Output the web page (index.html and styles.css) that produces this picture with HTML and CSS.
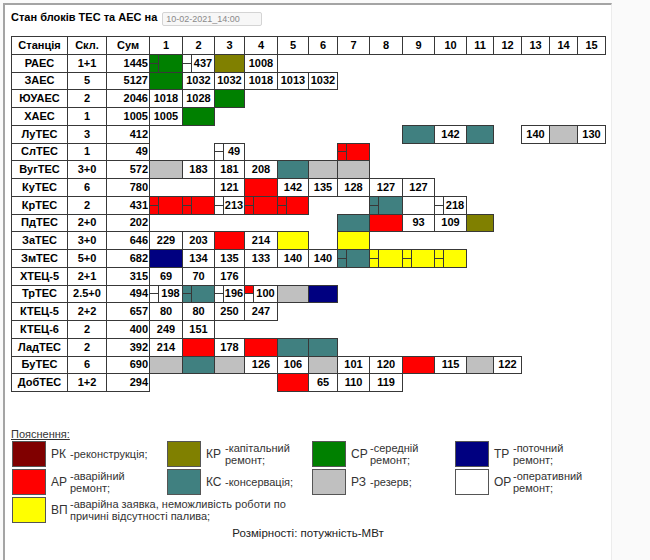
FILE: index.html
```html
<!DOCTYPE html>
<html lang="uk">
<head>
<meta charset="utf-8">
<title>Стан блоків ТЕС та АЕС</title>
<link rel="stylesheet" href="styles.css">
</head>
<body>
<div class="frame">
  <div class="head">
    <span class="title">Стан блоків ТЕС та АЕС на</span>
    <input class="date" type="text" value="10-02-2021_14:00" disabled>
  </div>

  <div class="tbl">
    <div class="c st">Станція</div><div class="c">Скл.</div><div class="c">Сум</div>
    <div class="c">1</div><div class="c">2</div><div class="c">3</div><div class="c">4</div><div class="c">5</div>
    <div class="c">6</div><div class="c">7</div><div class="c">8</div><div class="c">9</div><div class="c">10</div>
    <div class="c">11</div><div class="c">12</div><div class="c">13</div><div class="c">14</div><div class="c">15</div>

    <div class="c st">РАЕС</div><div class="c">1+1</div><div class="c sm">1445</div>
    <div class="c sp g"><span class="l"><i></i><i></i></span><span class="v"></span></div>
    <div class="c sp"><span class="l"><i></i><i></i></span><span class="v">437</span></div>
    <div class="c o"></div><div class="c">1008</div>

    <div class="c st">ЗАЕС</div><div class="c">5</div><div class="c sm">5127</div>
    <div class="c g"></div><div class="c">1032</div><div class="c">1032</div><div class="c">1018</div><div class="c">1013</div><div class="c">1032</div>

    <div class="c st">ЮУАЕС</div><div class="c">2</div><div class="c sm">2046</div>
    <div class="c">1018</div><div class="c">1028</div><div class="c g"></div>

    <div class="c st">ХАЕС</div><div class="c">1</div><div class="c sm">1005</div>
    <div class="c">1005</div><div class="c g"></div>

    <div class="c st">ЛуТЕС</div><div class="c">3</div><div class="c sm">412</div>
    <div></div><div></div><div></div><div></div><div></div><div></div><div></div><div></div>
    <div class="c t"></div><div class="c">142</div><div class="c t"></div><div></div><div class="c">140</div><div class="c s"></div><div class="c">130</div>

    <div class="c st">СлТЕС</div><div class="c">1</div><div class="c sm">49</div>
    <div></div><div></div>
    <div class="c sp"><span class="l"><i></i><i></i></span><span class="v">49</span></div>
    <div></div><div></div><div></div>
    <div class="c sp r"><span class="l"><i></i><i></i></span><span class="v"></span></div>

    <div class="c st">ВугТЕС</div><div class="c">3+0</div><div class="c sm">572</div>
    <div class="c s"></div><div class="c">183</div><div class="c">181</div><div class="c">208</div><div class="c t"></div><div class="c s"></div><div class="c s"></div>

    <div class="c st">КуТЕС</div><div class="c">6</div><div class="c sm">780</div>
    <div></div><div></div><div class="c">121</div><div class="c r"></div><div class="c">142</div><div class="c">135</div><div class="c">128</div><div class="c">127</div><div class="c">127</div>

    <div class="c st">КрТЕС</div><div class="c">2</div><div class="c sm">431</div>
    <div class="c sp r"><span class="l"><i></i><i></i></span><span class="v"></span></div>
    <div class="c sp r"><span class="l"><i></i><i></i></span><span class="v"></span></div>
    <div class="c sp"><span class="l"><i></i><i></i></span><span class="v">213</span></div>
    <div class="c sp r"><span class="l"><i></i><i></i></span><span class="v"></span></div>
    <div class="c sp r"><span class="l"><i></i><i></i></span><span class="v"></span></div>
    <div></div><div></div>
    <div class="c sp t"><span class="l"><i></i><i></i></span><span class="v"></span></div>
    <div></div>
    <div class="c sp"><span class="l"><i></i><i></i></span><span class="v">218</span></div>

    <div class="c st">ПдТЕС</div><div class="c">2+0</div><div class="c sm">202</div>
    <div></div><div></div><div></div><div></div><div></div><div></div>
    <div class="c t"></div><div class="c r"></div><div class="c">93</div><div class="c">109</div><div class="c o"></div>

    <div class="c st">ЗаТЕС</div><div class="c">3+0</div><div class="c sm">646</div>
    <div class="c">229</div><div class="c">203</div><div class="c r"></div><div class="c">214</div><div class="c y"></div><div></div><div class="c y"></div>

    <div class="c st">ЗмТЕС</div><div class="c">5+0</div><div class="c sm">682</div>
    <div class="c n"></div><div class="c">134</div><div class="c">135</div><div class="c">133</div><div class="c">140</div><div class="c">140</div>
    <div class="c sp t"><span class="l"><i></i><i></i></span><span class="v"></span></div>
    <div class="c sp y"><span class="l"><i></i><i></i></span><span class="v"></span></div>
    <div class="c sp y"><span class="l"><i></i><i></i></span><span class="v"></span></div>
    <div class="c sp y"><span class="l"><i></i><i></i></span><span class="v"></span></div>

    <div class="c st">ХТЕЦ-5</div><div class="c">2+1</div><div class="c sm">315</div>
    <div class="c">69</div><div class="c">70</div><div class="c">176</div>

    <div class="c st">ТрТЕС</div><div class="c">2.5+0</div><div class="c sm">494</div>
    <div class="c sp"><span class="l"><i></i><i></i></span><span class="v">198</span></div>
    <div class="c sp t"><span class="l"><i></i><i></i></span><span class="v"></span></div>
    <div class="c sp"><span class="l"><i></i><i></i></span><span class="v">196</span></div>
    <div class="c sp"><span class="l"><i class="r"></i><i></i></span><span class="v">100</span></div>
    <div class="c s"></div><div class="c n"></div>

    <div class="c st">КТЕЦ-5</div><div class="c">2+2</div><div class="c sm">657</div>
    <div class="c">80</div><div class="c">80</div><div class="c">250</div><div class="c">247</div>

    <div class="c st">КТЕЦ-6</div><div class="c">2</div><div class="c sm">400</div>
    <div class="c">249</div><div class="c">151</div>

    <div class="c st">ЛадТЕС</div><div class="c">2</div><div class="c sm">392</div>
    <div class="c">214</div><div class="c r"></div><div class="c">178</div><div class="c r"></div><div class="c t"></div><div class="c t"></div>

    <div class="c st">БуТЕС</div><div class="c">6</div><div class="c sm">690</div>
    <div class="c s"></div><div class="c t"></div><div class="c s"></div><div class="c">126</div><div class="c">106</div><div class="c s"></div>
    <div class="c">101</div><div class="c">120</div><div class="c r"></div><div class="c">115</div><div class="c s"></div><div class="c">122</div>

    <div class="c st">ДобТЕС</div><div class="c">1+2</div><div class="c sm">294</div>
    <div></div><div></div><div></div><div></div>
    <div class="c r"></div><div class="c">65</div><div class="c">110</div><div class="c">119</div>
  </div>

  <div class="note">Пояснення:</div>
  <div class="legend">
    <div class="it"><span class="sw m"></span><span class="ab">РК</span><span class="ds">-реконструкція;</span></div>
    <div class="it"><span class="sw o"></span><span class="ab">КР</span><span class="ds">-капітальний<br>ремонт;</span></div>
    <div class="it"><span class="sw g"></span><span class="ab">СР</span><span class="ds">-середній<br>ремонт;</span></div>
    <div class="it"><span class="sw n"></span><span class="ab">ТР</span><span class="ds">-поточний<br>ремонт;</span></div>

    <div class="it"><span class="sw r"></span><span class="ab">АР</span><span class="ds">-аварійний<br>ремонт;</span></div>
    <div class="it"><span class="sw t"></span><span class="ab">КС</span><span class="ds">-консервація;</span></div>
    <div class="it"><span class="sw s"></span><span class="ab">РЗ</span><span class="ds">-резерв;</span></div>
    <div class="it"><span class="sw w"></span><span class="ab">ОР</span><span class="ds">-оперативний<br>ремонт;</span></div>

    <div class="it wide"><span class="sw y"></span><span class="ab">ВП</span><span class="ds">-аварійна заявка, неможливість роботи по<br>причині відсутності палива;</span></div>
  </div>
  <div class="dims">Розмірності: потужність-МВт</div>
</div>
</body>
</html>
```

FILE: styles.css
```css
html {
  background: #fafafa;
}

body {
  margin: 0;
  font-family: "Liberation Sans", Arial, sans-serif;
  color: #000;
}

.frame {
  box-sizing: border-box;
  margin: 3px 0 0 3px;
  width: 609px;
  height: 557px;
  padding: 0 0 0 6px;
  background: #fff;
  border-top: 2px solid #a4a4a4;
  border-left: 2px solid #a4a4a4;
  border-right: 1px solid #ececec;
  overflow: hidden;
}

/* title row */
.head {
  box-sizing: border-box;
  height: 31px;
  padding-top: 7px;
  display: flex;
  align-items: flex-start;
  gap: 5px;
}

.title {
  font-size: 11px;
  font-weight: bold;
  line-height: 14px;
  margin-top: -2px;
}

.date {
  box-sizing: border-box;
  width: 100px;
  height: 14px;
  margin: 0;
  padding: 0 0 0 3px;
  border: 1px solid #d4d4d4;
  border-radius: 2px;
  background: #f7f7f7;
  color: #8a8a8a;
  font-family: "Liberation Sans", Arial, sans-serif;
  font-size: 9px;
  line-height: 12px;
  -webkit-appearance: none;
  appearance: none;
}

/* main table */
.tbl {
  display: grid;
  grid-template-columns: 56px 39px 43px 33px 32px 30px 33px 31px 29px 32px 33px 32px 32px 27px 28px 28px 28px 28px;
  grid-auto-rows: 17.75px;
  width: 594px;
  font-size: 11px;
  font-weight: bold;
  line-height: 1;
}

.c {
  border: 1px solid #383838;
  margin: 0 -1px -1px 0;
  display: flex;
  align-items: center;
  justify-content: center;
  background: #fff;
  white-space: nowrap;
  overflow: hidden;
}

.st {
  grid-column-start: 1;
}

.sm {
  justify-content: flex-end;
  padding-right: 1px;
}

.sp {
  align-items: stretch;
  justify-content: flex-start;
}

.sp .l {
  width: 8px;
  flex: none;
  border-right: 1px solid #383838;
  display: flex;
  flex-direction: column;
}

.sp .l i {
  flex: 1;
}

.sp .l i:first-child {
  border-bottom: 1px solid #383838;
}

.sp .v {
  flex: 1;
  display: flex;
  align-items: center;
  justify-content: center;
}

/* state colours */
.g { background: #008000; }
.o { background: #808000; }
.r { background: #ff0000; }
.t { background: #408080; }
.s { background: #c0c0c0; }
.n { background: #000080; }
.y { background: #ffff00; }
.m { background: #800000; }
.w { background: #fff; }

/* legend */
.note {
  margin-top: 37px;
  font-size: 11px;
  line-height: 13px;
  color: #333;
  text-decoration: underline;
}

.legend {
  display: grid;
  grid-template-columns: 155px 145px 143px 150px;
  grid-auto-rows: 26px;
  row-gap: 2px;
  padding-left: 1px;
  color: #333;
}

.it {
  display: flex;
  align-items: center;
}

.wide {
  grid-column: 1 / span 3;
}

.sw {
  box-sizing: border-box;
  width: 34px;
  height: 26px;
  flex: none;
  border: 1px solid #555;
}

.ab {
  box-sizing: border-box;
  width: 24px;
  flex: none;
  padding-left: 5px;
  font-size: 12px;
}

.ds {
  font-size: 11px;
  line-height: 12.5px;
}

.dims {
  width: 594px;
  margin-top: 4px;
  text-align: center;
  font-size: 11.5px;
  line-height: 13px;
  color: #222;
}
```
